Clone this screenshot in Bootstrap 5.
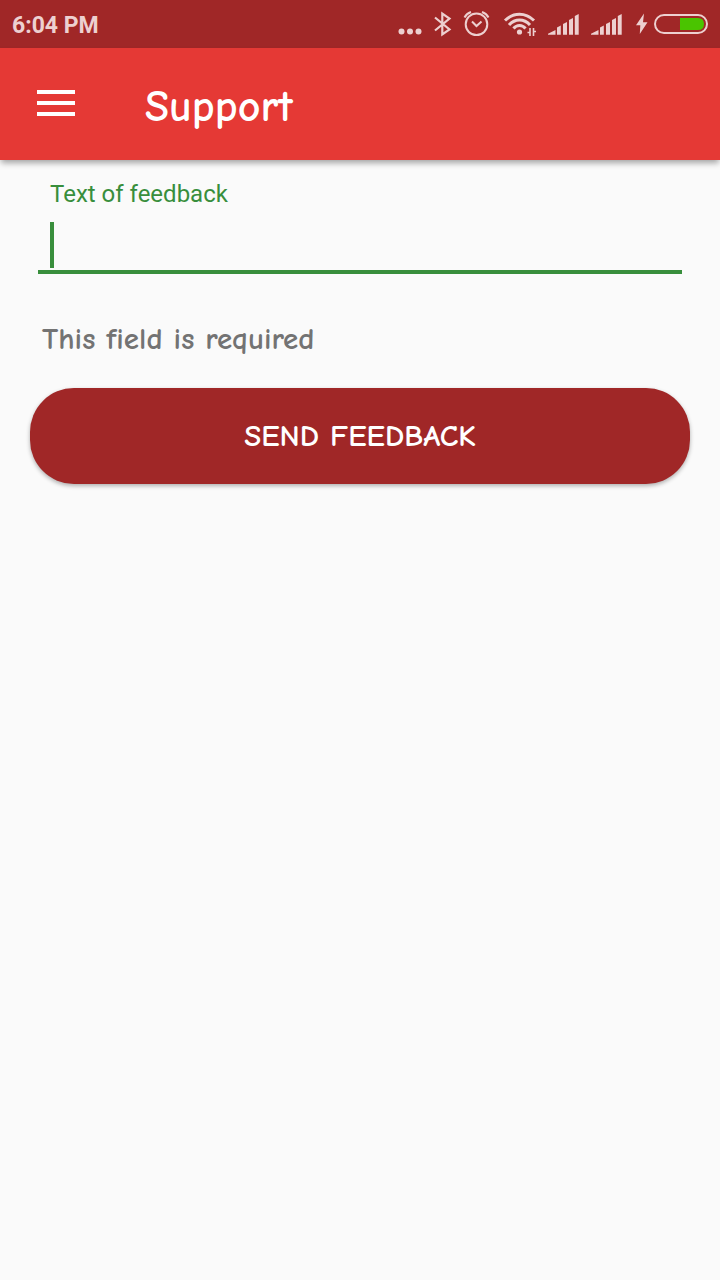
<!DOCTYPE html>
<html lang="en">
<head>
<meta charset="utf-8">
<meta name="viewport" content="width=device-width, initial-scale=1">
<title>Support</title>
<link href="https://cdn.jsdelivr.net/npm/bootstrap@5.3.0/dist/css/bootstrap.min.css" rel="stylesheet">
<style>
  body { background: #fafafa; font-family: Roboto, sans-serif; }
  .hand { font-family: "Comic Neue", "Comic Sans MS", Inter, sans-serif; font-weight: 700; }
  .status-bar { background: #a02727; color: #edd0d0; height: 48px; padding: 0 12px; }
  .clock { font-size: 23px; line-height: 32px; font-weight: 700; padding-top: 4px; }
  .status-icons { gap: 4px; }
  .app-bar { background: #e53935; height: 112px; padding: 0 32px; gap: 65px; box-shadow: 0 4px 6px -1px rgba(0,0,0,.35); }
  .menu-btn { line-height: 0; padding: 4px 5px 6px; }
  .app-title { font-size: 44px; line-height: 48px; padding-top: 6px; color: #fff; }
  .support-form { padding: 16px 30px; }
  .feedback-field { margin: 0 8px; color: #388e3c; }
  .feedback-label { font-size: 24px; line-height: 36px; padding: 0 12px; }
  .feedback-input, .feedback-input:focus { height: 62px; padding: 8px 12px; background: transparent; border: 0; border-bottom: 4px solid #388e3c; border-radius: 0; box-shadow: none; font-size: 36px; caret-color: transparent; }
  .caret { position: absolute; left: 12px; bottom: 6px; width: 4px; height: 46px; background: #388e3c; }
  .hint { margin: 44px 12px 28px; font-size: 31px; line-height: 42px; color: #737373; }
  .send-btn, .send-btn:hover { height: 96px; border: 0; border-radius: 44px; background: #a02727; color: #fff; font-size: 31px; box-shadow: 0 2px 4px rgba(0,0,0,.3); }
</style>
</head>
<body>
<div class="status-bar d-flex align-items-center justify-content-between">
  <span class="clock">6:04 PM</span>
  <div class="status-icons d-flex" aria-hidden="true">
    <svg width="30" height="48" fill="currentColor"><circle cx="5.5" cy="31.5" r="3"/><circle cx="14" cy="31.5" r="3"/><circle cx="22.5" cy="31.5" r="3"/></svg>
    <svg width="26" height="48" fill="none" stroke="currentColor" stroke-width="2.2"><path d="M5 17.5 19.5 29.5 12.3 34.5V13.5L19.5 18.5 5 30.5"/></svg>
    <svg width="38" height="48" fill="none" stroke="currentColor" stroke-width="2"><circle cx="16.5" cy="24.3" r="10.8"/><path d="M12 21.5 16.5 26 21.5 21.5"/><path d="M4.5 17.5Q6.5 13.5 11 12M22 12Q26.5 13.5 28.5 17.5"/></svg>
    <svg width="40" height="48" fill="none" stroke="currentColor" stroke-width="3"><path d="M3 20.5Q9.5 14.3 17.5 14.3T32 20.5M7 25Q11.5 20 17.5 20T28 25M11.5 28.5Q14 25.5 17.5 25.5T23.5 28.5"/><circle cx="17.5" cy="32" r="2.6" fill="currentColor" stroke="none"/><path d="M28 28v8M31.5 28v8M25.5 32.5h3M31 31.5h3" stroke-width="1.6"/></svg>
    <svg width="38" height="48" fill="currentColor"><path d="M2 34.7V33.8L9.5 30V34.7ZM11 34.7V27.5L14.8 25.5V34.7ZM17 34.7V24L21 22V34.7ZM23 34.7V20L27 18V34.7ZM28.8 34.7V16L32.7 14V34.7Z"/></svg>
    <svg width="42" height="48" fill="currentColor"><path d="M3 34.7V33.8L10.5 30V34.7ZM12 34.7V27.5L15.8 25.5V34.7ZM18 34.7V24L22 22V34.7ZM24 34.7V20L28 18V34.7ZM29.8 34.7V16L33.7 14V34.7Z"/></svg>
    <svg width="16" height="48" fill="currentColor"><path d="M10 13.5 2 25.2H6.3L5.8 34 13.5 22.3H9Z"/></svg>
    <svg width="54" height="48"><rect x="1" y="15" width="52" height="18" rx="9" fill="none" stroke="currentColor" stroke-width="2"/><path d="M26 18H44Q50 18 50 24T44 30H26Z" fill="#4ac400"/></svg>
  </div>
</div>
<header class="app-bar d-flex align-items-center">
  <button type="button" class="menu-btn btn border-0" aria-label="Open menu">
    <svg width="38" height="26" fill="#fff"><path d="M0 0h38v4H0zM0 11h38v4H0zM0 22h38v4H0z"/></svg>
  </button>
  <h1 class="app-title hand mb-0">Support</h1>
</header>
<main>
  <form class="support-form">
    <div class="feedback-field position-relative">
      <label class="feedback-label d-block" for="feedback">Text of feedback</label>
      <input class="feedback-input form-control" id="feedback" type="text" aria-describedby="feedback-hint" required>
      <span class="caret" aria-hidden="true"></span>
    </div>
    <p class="hint hand" id="feedback-hint">This field is required</p>
    <button type="submit" class="send-btn hand btn w-100 text-uppercase">Send feedback</button>
  </form>
</main>
<script src="https://cdn.jsdelivr.net/npm/bootstrap@5.3.0/dist/js/bootstrap.bundle.min.js"></script>
</body>
</html>
